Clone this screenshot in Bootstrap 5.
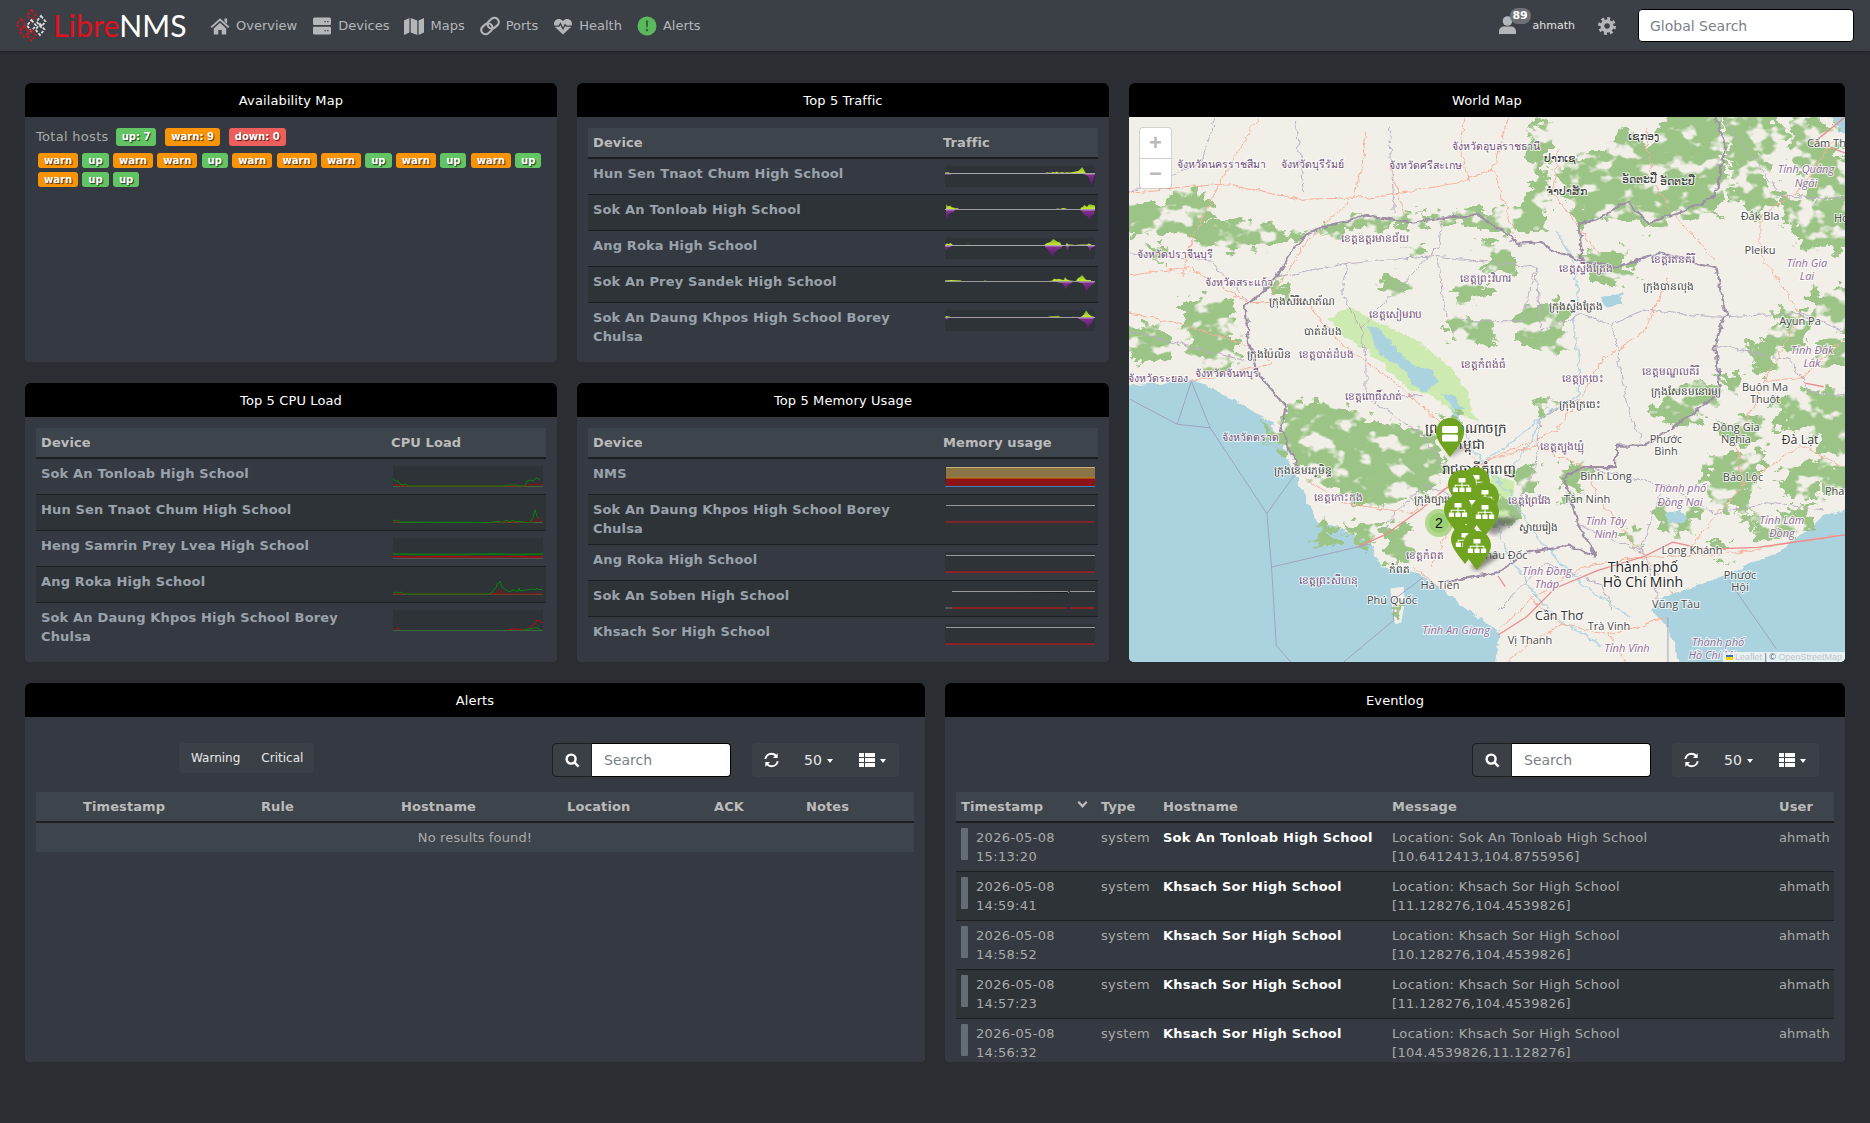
<!DOCTYPE html>
<html lang="en">
<head>
<meta charset="UTF-8">
<meta name="viewport" content="width=device-width, initial-scale=1.0">
<title>LibreNMS</title>
<link href="https://cdn.jsdelivr.net/npm/bootstrap@5.3.2/dist/css/bootstrap.min.css" rel="stylesheet">
<style>
body {
    background: #2a2e33;
    color: #aaa;
    font-family: "DejaVu Sans", sans-serif;
    font-size: 13px;
    line-height: 19px;
    min-height: 1123px;
}

/* top bar */
.top-bar {
    height: 51px;
    background: #3b4046;
    box-shadow: 0 1px 2px rgba(0,0,0,.25);
    padding: 0 15px;
    flex-wrap: nowrap;
}
.logo-link { width: 171px; height: 51px; color: #fff; font-family: "Lato", sans-serif; font-weight: 400; font-size: 30px; letter-spacing: .2px; text-decoration: none; }
.logo-link svg { width: 33px; height: 33px; margin-right: 5px; flex: none; }
.logo-red { color: #e3101e; }
.menu-link { color: #b4b7ba; text-decoration: none; display: flex; align-items: center; gap: 6px; white-space: nowrap; }
.menu-link svg { height: 20px; width: 20px; fill: #b4b7ba; flex: none; }
.top-menu { margin-left: 24px; gap: 15px; }
.user-box { position: relative; margin-left: auto; color: #e2e2e2; font-size: 11px; padding-left: 34px; height: 51px; }
.user-box > svg { position: absolute; left: 0; top: 15px; width: 17px; height: 19px; fill: #b4b7ba; }
.user-count { position: absolute; left: 11px; top: 8px; background: #6d7175; color: #fff; border-radius: 8px; font-size: 11px; font-weight: 700; line-height: 16px; width: 21px; text-align: center; }
.gear-icon { width: 18px; height: 18px; margin: 0 22px 0 23px; fill: none; stroke: #b4b7ba; }
.top-search { width: 216px; height: 33px; border: 1px solid #000; border-radius: 4px; padding: 0 11px; font-size: 14px; background: #fff; outline: 0; margin-right: 1px; }
.top-search::placeholder, .grid-search input::placeholder { color: #7a8288; opacity: 1; }

/* dashboard */
.dash-grid {
    display: grid;
    grid-template-columns: 532px 532px 716px;
    grid-template-rows: 279px 279px;
    gap: 21px 20px;
    padding: 32px 25px 0;
}
.map-cell { grid-column: 3; grid-row: 1 / span 2; }
.dash-bottom { display: flex; gap: 20px; padding: 21px 25px 0; }
.dash-bottom .panel-box { width: 900px; height: 379px; }
.panel-box {
    background: #353a42;
    border: 0;
    border-radius: 5px;
    overflow: hidden;
    color: #aaa;
    box-shadow: 0 0 1px rgba(255,255,255,.1);
}
.panel-head {
    background: #000;
    color: #fff;
    height: 34px;
    line-height: 36px;
    padding: 0;
    border: 0;
    border-radius: 0;
    text-align: center;
    letter-spacing: .12px;
}
.panel-inner { padding: 11px; }

/* availability */
.avail-top { display: flex; align-items: center; height: 18px; margin: 0 0 7px 0; }
.avail-top span:first-child { margin-right: 7px; letter-spacing: .3px; position: relative; top: -1px; }
.host-tag {
    display: inline-block;
    color: #fff;
    font-size: 10px;
    font-weight: 700;
    line-height: 15px;
    padding: 0 6px;
    border-radius: 3px;
    text-shadow: 1px 1px 1px rgba(0,0,0,.7);
}
.avail-top .host-tag { line-height: 18px; margin-right: 9px; }
.tag-up { background: #62c462; }
.tag-warn { background: #f89406; }
.tag-down { background: #ee5f5b; }
.tag-list { display: flex; flex-wrap: wrap; gap: 4px 4.3px; margin: 0 0 0 2px; width: 508px; }

/* tables */
.dash-table {
    --bs-table-bg: transparent;
    --bs-table-color: #aaa;
    table-layout: fixed;
    width: 100%;
    margin: 0;
    line-height: 19px;
    border-collapse: separate;
    border-spacing: 0;
}
.dash-table th {
    background: #3e444c;
    color: #bbb;
    font-weight: 700;
    padding: 5px;
    border: 0;
    border-bottom: 2px solid #1c1e22;
    white-space: nowrap;
    position: relative;
    letter-spacing: .1px;
}
.dash-table td {
    padding: 5px;
    border: 0;
    border-bottom: 1px solid #1c1e22;
    vertical-align: top;
    background: transparent;
    color: #aaa;
    letter-spacing: .33px;
}
.dash-table tbody tr:nth-child(even) > td { background: #2e3338; }
.dash-table tbody tr:last-child > td { border-bottom: 0; }
.dash-table tbody tr { height: 36px; }
.dash-table tbody tr.tall-row > td { padding-bottom: 6px; }
.host-link { color: #9aa2ab; font-weight: 700; text-decoration: none; letter-spacing: .16px; }
.col-graph { width: 160px; }
.spark { display: block; width: 150px; height: 21px; margin: 2px 0 0 2px; background: #2e3338; }
.sort-mark { position: absolute; right: 8px; top: 9px; width: 11px; height: 8px; fill: #bbb; }

/* toolbars */
.grid-bar { display: flex; align-items: flex-start; margin: 15px 0; height: 34px; }
.state-group { margin-left: 143px; background: #3b4047; border-radius: 4px; height: 30px; display: flex; align-items: center; padding: 0 11px 0 12px; gap: 21px; color: #e8e8e8; font-size: 12px; }
.grid-search { display: flex; height: 34px; margin-left: auto; }
.grid-search span { width: 40px; background: #3b4047; border: 1px solid #1c1e22; border-radius: 4px 0 0 4px; display: flex; align-items: center; justify-content: center; }
.grid-search svg { width: 15px; height: 15px; fill: none; stroke: #fff; stroke-width: 2.6; }
.grid-search input { width: 139px; border: 1px solid #000; border-left: 0; border-radius: 0 4px 4px 0; padding: 0 12px; font-size: 14px; outline: 0; background: #fff; }
.grid-actions { display: flex; align-items: center; height: 34px; width: 147px; margin: 0 15px 0 21px; background: #3b4047; border-radius: 4px; color: #e8e8e8; font-size: 14px; padding: 0 0 0 12px; }
.grid-actions svg { fill: #fff; flex: none; }
.caret-mark { display: inline-block; border-top: 4px solid #fff; border-left: 3.5px solid transparent; border-right: 3.5px solid transparent; margin-left: 5px; margin-top: 2px; }
.act-sync { width: 15px; height: 16px; margin-right: 25px; }
.act-list { width: 16px; height: 14px; margin-left: 26px; }
.dash-table tbody tr.no-rows { height: 29px; }
.no-rows td { text-align: center; background: #3e444c !important; padding: 5px; letter-spacing: .14px; }

.stamp-cell { display: flex; gap: 8px; white-space: normal; }
.stamp-bar { width: 7px; height: 32px; background: #666c75; flex: none; border-radius: 1px; }
.host-strong { color: #fff; font-weight: 700; letter-spacing: .23px; }
.log-table tbody tr { height: 49px; }
.log-table td:last-child { white-space: nowrap; padding-right: 0; letter-spacing: .1px; }

/* world map */
.map-wrap { position: relative; height: 545px; overflow: hidden; background: #f2efe9; }
.map-wrap > svg { display: block; width: 716px; height: 545px; }
.map-zoom { position: absolute; left: 11px; top: 11px; width: 31px; height: 60px; background: #fff; border-radius: 3px; box-shadow: 0 0 0 1px rgba(0,0,0,.12); color: #bbb; font: 700 22px/30px "Liberation Sans", sans-serif; text-align: center; }
.map-zoom div:first-child { border-bottom: 1px solid #ccc; }
.map-credit { position: absolute; right: 0; bottom: 0; height: 10px; background: rgba(255,255,255,.7); color: #c4c4c4; font: 9px/10px "Liberation Sans", sans-serif; padding: 0 3px; white-space: nowrap; }
.map-credit i { display: inline-block; width: 7px; height: 5px; background: linear-gradient(#3a6fc4 50%, #ffd500 50%); margin-right: 2px; }
.map-credit b { font-weight: 400; color: #555; }
.ml { font-family: "Open Sans", "Noto Sans", sans-serif; font-size: 11px; fill: #4a4a4a; text-anchor: middle; paint-order: stroke; stroke: rgba(255,255,255,.75); stroke-width: 2px; }
.ml.big { font-size: 14px; fill: #222; }
.ml.mid { font-size: 12.5px; fill: #333; }
.ml.it { font-style: italic; fill: #8f6a96; }
.ml.pv { fill: #6f4e78; font-size: 10.5px; }
.ml.tw { fill: #3c3c3c; font-size: 10.5px; }
.ml.cap { fill: #2c2c2c; font-size: 13.5px; }
.ml.st { text-anchor: start; }
.mp { vector-effect: non-scaling-stroke; }
.svg-store { position: absolute; width: 0; height: 0; }
</style>
</head>
<body>

<svg class="svg-store" aria-hidden="true">
    <defs>
        <linearGradient id="upFill" gradientUnits="userSpaceOnUse" x1="0" y1="0" x2="0" y2="7.500">
            <stop offset="0" stop-color="#5aa81a"/><stop offset=".55" stop-color="#a6d02a"/><stop offset="1" stop-color="#d2e83c"/>
        </linearGradient>
        <linearGradient id="downFill" gradientUnits="userSpaceOnUse" x1="0" y1="7.500" x2="0" y2="21">
            <stop offset="0" stop-color="#c98fc8"/><stop offset=".14" stop-color="#7f2f8c"/><stop offset="1" stop-color="#4a1458"/>
        </linearGradient>
        <filter id="roughBig" x="-5%" y="-5%" width="110%" height="110%">
            <feTurbulence type="fractalNoise" baseFrequency=".035" numOctaves="4" seed="7" result="warp"/>
            <feDisplacementMap in="SourceGraphic" in2="warp" scale="70" xChannelSelector="R" yChannelSelector="G" result="shape"/>
            <feTurbulence type="fractalNoise" baseFrequency=".022" numOctaves="3" seed="11"/>
            <feColorMatrix type="matrix" values="0 0 0 0 0  0 0 0 0 0  0 0 0 0 0  8 0 0 0 -2.800" result="holes"/>
            <feComposite in="shape" in2="holes" operator="in"/>
        </filter>
        <filter id="roughSmall" x="-5%" y="-5%" width="110%" height="110%">
            <feTurbulence type="fractalNoise" baseFrequency=".05" numOctaves="3" seed="4"/>
            <feDisplacementMap in="SourceGraphic" scale="18" xChannelSelector="R" yChannelSelector="G"/>
        </filter>
        <filter id="softShade"><feGaussianBlur stdDeviation="2"/></filter>
        <symbol id="pin" viewBox="0 0 30 39">
            <path d="M15 0C6.700 0 1 6.500 1 14.600 1 23 10.500 33 15 39 19.500 33 29 23 29 14.600 29 6.500 23.300 0 15 0Z" fill="#6fa320"/>
        </symbol>
        <g id="pinNet" fill="#fff">
            <rect x="11.500" y="8" width="7" height="4.500" rx=".6"/>
            <path d="M14.500 12.500h1v2.300h6.800v2.700h-1v-1.700h-5.800v1.700h-1v-1.700H8.700v1.700h-1v-2.700h6.800z"/>
            <rect x="5.800" y="17.500" width="5.200" height="4.500" rx=".6"/><rect x="12.400" y="17.500" width="5.200" height="4.500" rx=".6"/><rect x="19" y="17.500" width="5.200" height="4.500" rx=".6"/>
        </g>
        <symbol id="icHome" viewBox="0 0 20 20"><path d="M10 2.200 19.500 10.800l-1.300 1.300L10 4.700 1.800 12.100.5 10.800zM14.500 2.500h2.600v5.300l-2.600-2.300zM3.800 12.400 10 6.800l6.200 5.600v6.100h-4.500v-4.600H8.300v4.600H3.800z"/></symbol>
        <symbol id="icServer" viewBox="0 0 20 20"><path fill-rule="evenodd" d="M2.500 1.500h15a1.500 1.500 0 0 1 1.500 1.500v5a1 1 0 0 1-1 1H2a1 1 0 0 1-1-1V3a1.500 1.500 0 0 1 1.500-1.500zm10 3.500h1.300v1.300h-1.300zm2.700 0h1.300v1.300h-1.300zM2 10.800h16a1 1 0 0 1 1 1V17a1.500 1.500 0 0 1-1.500 1.500h-15A1.500 1.500 0 0 1 1 17v-5.200a1 1 0 0 1 1-1zm10.500 3.200v1.300h1.300V14zm2.700 0v1.300h1.300V14z"/></symbol>
        <symbol id="icMap" viewBox="0 0 20 20"><path d="M0 4.500 5.400 2v14.600L0 19zM6.700 2l6.600 2.500V19l-6.600-2.400zM14.600 4.500 20 2v14.600L14.600 19z"/></symbol>
        <symbol id="icLink" viewBox="0 0 20 20"><g fill="none" stroke="#b4b7ba" stroke-width="2.100"><rect x="-6" y="-4.300" width="12" height="8.600" rx="4.300" transform="translate(6.800 12.800) rotate(-40)"/><rect x="-6" y="-4.300" width="12" height="8.600" rx="4.300" transform="translate(13.200 7.200) rotate(-40)"/></g></symbol>
        <symbol id="icHeart" viewBox="0 0 20 20"><path d="M10 18.500 2.500 11.500C.6 9.600.4 6.500 2.200 4.500 4.100 2.400 7.700 2.300 10 5c2.300-2.700 5.900-2.600 7.800-.5 1.800 2 1.600 5.100-.3 7z"/><path d="M1 10.200h5l1.500-2.500 2.500 5 2-4 1.200 1.500H19" fill="none" stroke="#3b4046" stroke-width="1.300"/></symbol>
        <symbol id="icUser" viewBox="0 0 17 19"><circle cx="8.500" cy="6" r="4.800"/><path d="M0 19v-2.800C0 13.500 2.500 11.500 5 11.500h7c2.500 0 5 2 5 4.700V19z"/></symbol>
        <symbol id="icSync" viewBox="0 0 16 16"><path d="M8 2.300a5.600 5.600 0 0 0-5.500 4.500H.4A7.700 7.700 0 0 1 8 .3c2 0 3.700.8 5 2L14.600.7v5.100H9.500l2-2A5.500 5.500 0 0 0 8 2.300zM8 13.700a5.600 5.600 0 0 0 5.500-4.500h2.100A7.700 7.700 0 0 1 8 15.700c-2 0-3.700-.8-5-2l-1.600 1.600v-5.100h5.100l-2 2A5.500 5.500 0 0 0 8 13.700z"/></symbol>
        <symbol id="icList" viewBox="0 0 16 14"><path d="M0 0h5v4H0zM6 0h10v4H6zM0 5h5v4H0zM6 5h10v4H6zM0 10h5v4H0zM6 10h10v4H6z"/></symbol>
    </defs>
</svg>

<nav class="navbar top-bar d-flex align-items-center">
    <a class="logo-link d-flex align-items-center" href="#">
        <svg viewBox="0 0 33 33">
            <g fill="none" stroke-width="1.800" stroke-dasharray="3 1.500">
                <path d="M16.500 1 21 6.500 16.500 12 12 6.500Z" stroke="#c81622"/>
                <path d="M6 10 10.500 15.500 6 21 1.500 15.500Z" stroke="#c81622"/>
                <path d="M26 7 30.500 12.500 26 18 21.500 12.500Z" stroke="#dcdcdc"/>
                <path d="M16.500 11 21 16.500 16.500 22 12 16.500Z" stroke="#dcdcdc"/>
                <path d="M9 17 13.500 22.500 9 28 4.500 22.500Z" stroke="#c81622"/>
                <path d="M25 15 29.500 20.500 25 26 20.500 20.500Z" stroke="#dcdcdc"/>
                <path d="M16.500 21 21 26.500 16.500 32 12 26.500Z" stroke="#c81622"/>
            </g>
        </svg>
        <span><span class="logo-red">Libre</span>NMS</span>
    </a>
    <ul class="navbar-nav flex-row top-menu">
        <li class="nav-item"><a class="menu-link" href="#"><svg><use href="#icHome"/></svg>Overview</a></li>
        <li class="nav-item"><a class="menu-link" href="#"><svg><use href="#icServer"/></svg>Devices</a></li>
        <li class="nav-item"><a class="menu-link" href="#"><svg><use href="#icMap"/></svg>Maps</a></li>
        <li class="nav-item"><a class="menu-link" href="#"><svg><use href="#icLink"/></svg>Ports</a></li>
        <li class="nav-item"><a class="menu-link" href="#"><svg><use href="#icHeart"/></svg>Health</a></li>
        <li class="nav-item"><a class="menu-link" href="#">
            <svg viewBox="0 0 20 20"><circle cx="10" cy="10" r="9.500" fill="#5cb85c"/><path d="M8.800 4.500h2.400l-.4 7h-1.600zM8.900 13h2.200v2.300H8.900z" fill="#2f6b2f"/></svg>Alerts</a></li>
    </ul>
    <div class="user-box d-flex align-items-center">
        <svg><use href="#icUser"/></svg>
        <span class="user-count">89</span>
        ahmath
    </div>
    <svg class="gear-icon" viewBox="0 0 20 20">
        <circle cx="10" cy="10" r="5.200" stroke-width="4.200"/>
        <circle cx="10" cy="10" r="8.400" stroke-width="3.200" stroke-dasharray="3.300 3.300"/>
    </svg>
    <input class="top-search" type="text" placeholder="Global Search">
</nav>

<div class="dash-grid">
    <div class="card panel-box">
        <div class="card-header panel-head">Availability Map</div>
        <div class="card-body panel-inner">
            <div class="avail-top">
                <span>Total hosts</span>
                <span class="host-tag tag-up">up: 7</span>
                <span class="host-tag tag-warn">warn: 9</span>
                <span class="host-tag tag-down">down: 0</span>
            </div>
            <div class="tag-list">
                <span class="host-tag tag-warn">warn</span><span class="host-tag tag-up">up</span><span class="host-tag tag-warn">warn</span><span class="host-tag tag-warn">warn</span><span class="host-tag tag-up">up</span><span class="host-tag tag-warn">warn</span><span class="host-tag tag-warn">warn</span><span class="host-tag tag-warn">warn</span><span class="host-tag tag-up">up</span><span class="host-tag tag-warn">warn</span><span class="host-tag tag-up">up</span><span class="host-tag tag-warn">warn</span><span class="host-tag tag-up">up</span><span class="host-tag tag-warn">warn</span><span class="host-tag tag-up">up</span><span class="host-tag tag-up">up</span>
            </div>
        </div>
    </div>

    <div class="card panel-box">
        <div class="card-header panel-head">Top 5 Traffic</div>
        <div class="card-body panel-inner">
            <table class="table dash-table">
                <thead><tr><th>Device</th><th class="col-graph">Traffic</th></tr></thead>
                <tbody>
                    <tr><td><a class="host-link" href="#">Hun Sen Tnaot Chum High School</a></td><td><svg class="spark" viewBox="0 0 150 21">
                        <path d="M0 7.500V6.800L3 6.200 6 7.500ZM100 7.500l1-1 5 .2 2-.7 2 .5 2-1 1 1h3l1-.6 3 .8 1-.5 4 .3 3-.4 5-1 2-1.500 2-2.500 1.500 2 1.500 3 1 1.200v.7Z" fill="url(#upFill)"/>
                        <path d="M0 7.500h6V8.500H0zM137 7.500h13l-1 3-1 5-1.500 4-1.500-4-1-4-3-2.500-3-1Z" fill="url(#downFill)"/>
                        <path d="M0 7.500h150" stroke="#a9a9a9"/></svg></td></tr>
                    <tr><td><a class="host-link" href="#">Sok An Tonloab High School</a></td><td><svg class="spark" viewBox="0 0 150 21">
                        <path d="M1 7.500 1.500 2 3 4.500 5 3.500 7 5.500h2l1 .7h3l1 1.300ZM110 7.500l2-1 3 .5 3-1 3 .5 2 1ZM135 7.500l1-2 2-.5 1-2 2 1 1 1 2-3 1 1 1-1 1 1 2 0 1 1v4Z" fill="url(#upFill)"/>
                        <path d="M1 7.500h9l-2 3-3 .5-2 2-1 4-1-4ZM135 7.500h15l-1 4-1 2-1-1-1.500 3-1 3-2-4-2-1-2-1-1.500-3-2.500-2Z" fill="url(#downFill)"/>
                        <path d="M0 7.500h150" stroke="#a49aa4"/></svg></td></tr>
                    <tr><td><a class="host-link" href="#">Ang Roka High School</a></td><td><svg class="spark" viewBox="0 0 150 21">
                        <path d="M0 7.500 1 5.500l3 .5 1-1 2 1 1 1.500ZM22 7.500l1-1 1 1ZM99 7.500l2-2 3-1 2-1 2-2.500 2 1 2 1.500 3 1 2 3ZM120 7.500l1-1 1-2 1 2 2 0 5 .5 6-.5 6 0 2-1 2 1 2 1.500Z" fill="url(#upFill)"/>
                        <path d="M0 7.500h7l-2 2-2-.5-1 2-1 2ZM100 7.500h18l-2 3-3 1-2 2-2 1-1 5-2-3-2-3-2-3-2-1ZM121 7.500h3l-1 5-1-1ZM142 7.500h8l-2 2-2 1-1 3-1-3Z" fill="url(#downFill)"/>
                        <path d="M0 7.500h150" stroke="#a9a9a9"/></svg></td></tr>
                    <tr><td><a class="host-link" href="#">Sok An Prey Sandek High School</a></td><td><svg class="spark" viewBox="0 0 150 21">
                        <path d="M0 7.500V6.500L6 6l10 .5 1 1ZM38 7.500l2-1 3 1ZM95 7.500l8-.5 4-.2 2-2 3 .5 2-.5 3 1 2 .2 1-3 2 2.500 3 1 4 .5 2 0 2-3 2-1 2-2 2 2 1 2 2 1 2 0 2 .3v1.200Z" fill="url(#upFill)"/>
                        <path d="M109 7.500h19l-2 2-2 1-2 2-1 3-1.500-3-2-3-4-1ZM132 7.500h18l-1 2-3 2-2 2-1.500 2-1 4-1-4-1-3-2-3-4-1Z" fill="url(#downFill)"/>
                        <path d="M0 7.500h150" stroke="#9a9a9a"/></svg></td></tr>
                    <tr><td><a class="host-link" href="#">Sok An Daung Khpos High School Borey Chulsa</a></td><td><svg class="spark" viewBox="0 0 150 21">
                        <path d="M0 7.500 1 6l5 1 1 .5ZM100 7.500l5-1 5-.3 3-.5 3 .8ZM116 7.500l4-.5 6 .2 2-.5 4 .5 3 0 2-1 2-2 1-2 1-2 1 1 1 2 2 2 2 1 2 .5v1.300Z" fill="url(#upFill)"/>
                        <path d="M0 7.500h3l-1 3ZM132 7.500h18l-2 2-1 3-2 2-1 2-1 4-1-4-1-3-3-2-3-2-3-2Z" fill="url(#downFill)"/>
                        <path d="M0 7.500h150" stroke="#a49aa4"/></svg></td></tr>
                </tbody>
            </table>
        </div>
    </div>

    <div class="card panel-box map-cell">
        <div class="card-header panel-head">World Map</div>
        <div class="map-wrap">
            <svg viewBox="0 0 716 545">
                <g transform="translate(1 -7) scale(.4719 .3571)">
                    <!-- sea -->
                    <path fill="#aad3df" filter="url(#roughSmall)" d="M-30 775 60 765 130 755 170 775 200 800 250 835 300 875 325 950 350 1020 375 1095 395 1155 450 1175 510 1215 530 1280 600 1290 650 1330 690 1375 750 1430 785 1470 770 1570H-30ZM1170 1570 1140 1450 1105 1400 1120 1370 1170 1345 1230 1320 1300 1280 1370 1240 1440 1170 1480 1130 1540 1105V1570ZM1480 0H1540V80L1500 60Z"/>
                    <path fill="#f2efe9" d="M552 1340 580 1335 582 1380 575 1435 562 1440 556 1400Z"/>
                    <!-- protected area round the lake -->
                    <path fill="#cdebb0" filter="url(#roughSmall)" d="M420 585 465 550 520 590 600 640 680 720 710 780 735 870 690 850 640 800 590 780 520 690 460 640Z"/>
                    <path fill="#cdebb0" d="M770 1020 815 1040 810 1130 770 1150 745 1090Z"/>
                    <!-- forest -->
                    <path fill="#9bc486" filter="url(#roughBig)" d="M-30 270 60 260 110 220 160 300 300 320 365 345 300 390 170 390 100 345-30 340ZM365 340 500 295 700 285 830 270 860 190 845 110 860 20 890 30 880 335 800 345 700 320 560 322 400 352ZM900 150 950 130 1000 115 1050 50 1100 95 1135 15 1250 5 1265 200 1245 295 1140 302 1100 335 1030 295 950 325 925 240ZM1258 5 1345 0 1395 60 1340 150 1270 145ZM1270 150 1340 140 1380 250 1320 300 1280 250ZM1375 250 1540 250 1540 395 1420 385ZM1400 30 1480 20 1510 130 1540 160 1540 250 1440 240 1400 130ZM1440 510 1540 485 1540 635 1450 595ZM1375 550 1440 580 1430 670 1360 650ZM1450 640 1540 640 1530 720 1470 720ZM1360 820 1440 780 1540 780 1540 890 1380 895ZM1120 790 1200 750 1260 790 1190 890 1110 870ZM1220 965 1350 955 1310 1110 1230 1115ZM1115 1100 1210 1110 1190 1190 1120 1180ZM1320 1140 1440 1170 1340 1215ZM1380 990 1480 980 1460 1090 1390 1080ZM1475 990 1540 980 1540 1080 1480 1070ZM320 820 430 820 530 870 640 910 670 1000 630 1090 500 1115 430 1060 380 1020 330 940ZM110 520 210 530 240 710 170 730 120 670ZM-30 610 70 600 90 690 20 710ZM820 570 910 530 945 650 890 690 820 650ZM670 580 770 580 780 660 690 650ZM815 1000 870 1005 860 1070 810 1060ZM540 1160 600 1170 602 1260 540 1270ZM450 1155 530 1160 500 1250ZM385 1160 430 1155 435 1220 390 1225ZM905 1010 975 980 960 1070 910 1055ZM745 360 820 390 810 460 750 450ZM535 455 600 480 580 530 535 510ZM690 490 760 480 770 530 700 540ZM580 380 630 380 620 430ZM950 400 1050 390 1070 480 990 490ZM1000 180 1120 165 1130 270 1040 290ZM110 220 170 230 180 300 120 290ZM560 1370 578 1370 575 1425 562 1430ZM1250 870 1340 850 1350 930 1260 935ZM1240 740 1300 730 1290 800ZM1380 1120 1450 1110 1440 1170 1380 1180ZM1450 890 1540 880 1540 970 1460 960ZM280 860 340 890 330 960 290 930ZM750 1110 825 1090 840 1150 770 1170ZM1310 650 1380 630 1375 730 1320 740ZM30 370 80 380 70 440ZM290 470 340 490 320 540ZM1280 1120 1330 1120 1320 1190ZM1225 1210 1280 1210 1270 1270ZM850 810 890 805 880 870ZM1030 1180 1090 1170 1080 1230ZM650 850 700 850 690 910ZM910 1080 955 1080 945 1140ZM600 990 650 980 640 1070 600 1060Z"/>
                    <!-- lake + rivers -->
                    <path fill="#aad3df" filter="url(#roughSmall)" d="M505 600 535 625 585 695 595 715 640 730 655 760 625 790 598 770 588 735 560 710 520 670ZM1000 520 1040 515 1045 545 1005 550ZM1135 1130 1170 1120 1180 1150 1140 1160ZM660 795 690 800 705 840 680 830Z"/>
                    <g fill="none" stroke="#b3d6e2" stroke-width="1.500" filter="url(#roughSmall)">
                        <path class="mp" d="M905 340 940 430 950 520 940 600 950 700 950 800 870 860 800 940 745 985 765 1100 800 1245 860 1360 920 1440 1000 1500"/>
                        <path class="mp" d="M745 985 700 880 670 800M745 985 800 1070 860 1190 950 1320 1060 1420M870 860 850 930 810 1000"/>
                    </g>
                    <!-- main roads -->
                    <g fill="none" stroke="#f5b09a" stroke-width="1" filter="url(#roughSmall)">
                        <path class="mp" d="M-30 235 190 205 360 250 520 245 690 205 770 165M270 25 190 205 130 360 110 470M500 60 490 170 470 250 380 360 300 520M710 20 700 110 720 200M550 150 580 290M800 20 770 165 820 370M910 110 895 230 990 400M1090 50 1110 200 1150 290 1240 420M1490 90 1420 220 1335 300 1335 400 1420 570 1345 760 1285 930 1300 1050 1180 1230M1515 640 1420 750 1345 760M1515 1000 1420 940 1300 1050M1090 1250 960 1280 850 1370 780 1460M1090 1250 1155 1360M1090 1250 1290 1240 1400 1210 1515 1190M1090 1250 1000 1100 960 1000 860 940 740 990M740 990 650 870 560 760 450 660 370 530 250 540M740 990 600 1130 450 1100 370 1030M740 990 700 1100 640 1280M740 990 900 900 960 800 1000 700 1090 620 1140 470M-30 470 120 440 250 540M-30 560 110 600 250 660 300 710 200 740 130 760M600 1280 660 1340M915 1440 1015 1470 1140 1420M850 1370 915 1440 850 1490 800 1545M1016 1470 1050 1545"/>
                    </g>
                    <path fill="none" stroke="#ea8d8f" stroke-width="1.300" class="mp" d="M615 1120 540 1190 480 1225M740 990 660 1070 615 1120M1090 1250 1150 1210 1220 1230 1330 1225 1515 1190M1090 1250 990 1290 900 1340 840 1420 780 1470M1430 765 1470 775M1515 20 1450 90 1515 120M780 1305 795 1335"/>
                    <!-- province lines -->
                    <g fill="none" stroke="#bcaec4" stroke-width="1" filter="url(#roughSmall)">
                        <path class="mp" d="M310 470 460 430 450 520 490 610 655 380 660 310M460 430 650 410 860 440 870 620 960 570 1020 600 1090 560 1240 580M650 410 670 580M1020 600 1060 860 1090 940M860 440 830 590 700 590M870 860 950 810M490 610 500 690 500 800 620 800M500 800 620 910 660 990M620 1050 720 1100M720 1100 800 1170M860 1000 800 1170M860 1000 870 860M620 1050 530 1180M1240 660 1400 700 1440 790 1515 800M1240 580 1420 570 1515 620M1260 30 1380 240 1515 250M960 1000 1130 1050 1240 1130 1350 1100 1470 1120M1130 1050 1080 1240M950 1160 1090 1240 1120 1370M880 1270 1000 1330 1020 1400M880 1270 780 1400M0 400 170 420 250 540M0 620 120 660 240 700M180 20 150 150 0 230M350 30 370 230M550 50 560 290"/>
                    </g>
                    <!-- maritime limits -->
                    <g fill="none" stroke="#9fa5bf" stroke-width="1">
                        <path class="mp" d="M300 1280 510 1215M300 1280 290 1130 170 890 130 760M290 1130 350 1020M300 1280 310 1500 350 1560M440 1560 558 1430 560 1370 620 1310M170 890 100 880 0 810M100 880 130 760M1140 1420 1140 1560M1270 1320 1370 1510"/>
                    </g>
                    <!-- national borders -->
                    <path fill="none" stroke="#9d8ea6" stroke-width="2.200" stroke-linejoin="round" class="mp" filter="url(#roughSmall)" d="M360 1020 320 900 332 830 275 745 250 650 245 550 310 470 345 390 370 350 430 320 500 295 600 315 680 300 740 295 790 340 820 375 870 370 910 400 960 425 950 320 1000 300 1055 255 1100 320 1140 295 1200 270 1240 240 1262 100 1240 20M960 425 1030 440 1120 400 1240 440 1262 570 1240 660 1250 790 1190 850 1140 900 1090 940 1030 940 1030 1000 960 1000 920 1030 950 1160 985 1245 930 1220 840 1240 780 1295 700 1315 660 1325"/>
                </g>

                <!-- place names -->
                <g>
                    <text class="ml st" x="678" y="30">Cẩm Th</text>
                    <text class="ml it" x="677" y="56">Tỉnh Quảng</text><text class="ml it" x="677" y="70">Ngãi</text>
                    <text class="ml" x="631" y="103">Đắk Bla</text>
                    <text class="ml st" x="705" y="105">Ho</text>
                    <text class="ml" x="631" y="137">Pleiku</text>
                    <text class="ml it" x="678" y="150">Tỉnh Gia</text><text class="ml it" x="678" y="163">Lai</text>
                    <text class="ml" x="671" y="208">Ayun Pa</text>
                    <text class="ml it" x="683" y="237">Tỉnh Đắk</text><text class="ml it" x="683" y="250">Lắk</text>
                    <text class="ml" x="636" y="274">Buôn Ma</text><text class="ml" x="636" y="286">Thuột</text>
                    <text class="ml" x="607" y="314">Đông Gia</text><text class="ml" x="607" y="326">Nghĩa</text>
                    <text class="ml mid" x="671" y="327">Đà Lạt</text>
                    <text class="ml" x="537" y="326">Phước</text><text class="ml" x="537" y="338">Bình</text>
                    <text class="ml" x="477" y="363">Bình Long</text>
                    <text class="ml" x="614" y="364">Bảo Lộc</text>
                    <text class="ml" x="458" y="386">Tân Ninh</text>
                    <text class="ml it" x="551" y="375">Thành phố</text><text class="ml it" x="551" y="389">Đồng Nai</text>
                    <text class="ml st" x="696" y="378">Phar</text>
                    <text class="ml it" x="477" y="408">Tỉnh Tây</text><text class="ml it" x="477" y="421">Ninh</text>
                    <text class="ml it" x="653" y="407">Tỉnh Lâm</text><text class="ml it" x="653" y="420">Đồng</text>
                    <text class="ml" x="563" y="437">Long Khánh</text>
                    <text class="ml big" x="514" y="455">Thành phố</text><text class="ml big" x="514" y="470">Hồ Chí Minh</text>
                    <text class="ml" x="611" y="462">Phước</text><text class="ml" x="611" y="474">Hội</text>
                    <text class="ml" x="547" y="491">Vũng Tàu</text>
                    <text class="ml" x="374" y="442">Châu Đốc</text>
                    <text class="ml it" x="418" y="458">Tỉnh Đồng</text><text class="ml it" x="418" y="471">Tháp</text>
                    <text class="ml" x="311" y="472">Hà Tiên</text>
                    <text class="ml" x="263" y="487">Phú Quốc</text>
                    <text class="ml mid" x="430" y="503">Cần Thơ</text>
                    <text class="ml" x="480" y="513">Trà Vinh</text>
                    <text class="ml" x="401" y="527">Vị Thanh</text>
                    <text class="ml it" x="498" y="535">Tỉnh Vĩnh</text>
                    <text class="ml it" x="327" y="517">Tỉnh An Giang</text>
                    <text class="ml it" x="589" y="529">Thành phố</text><text class="ml it" x="583" y="542">Hồ Chí Mi</text>

                    <text class="ml pv" x="92" y="51">จังหวัดนครราชสีมา</text>
                    <text class="ml pv" x="183" y="51">จังหวัดบุรีรัมย์</text>
                    <text class="ml pv" x="296" y="52">จังหวัดศรีสะเกษ</text>
                    <text class="ml pv" x="367" y="33">จังหวัดอุบลราชธานี</text>
                    <text class="ml pv" x="46" y="141">จังหวัดปราจีนบุรี</text>
                    <text class="ml pv" x="110" y="169">จังหวัดสระแก้ว</text>
                    <text class="ml pv" x="98" y="260">จังหวัดจันทบุรี</text>
                    <text class="ml pv" x="29" y="265">จังหวัดระยอง</text>
                    <text class="ml pv" x="121" y="324">จังหวัดตราด</text>
                    <text class="ml tw" x="431" y="45">ປາກເຊ</text>
                    <text class="ml tw" x="437" y="78">ຈຳປາສັກ</text>
                    <text class="ml tw" x="514" y="23">ເຊກອງ</text>
                    <text class="ml tw" x="510" y="66">ອັດຕະປື</text>
                    <text class="ml tw" x="548" y="68">ອັດຕະປື</text>

                    <text class="ml pv" x="246" y="125">ខេត្តឧត្តរមានជ័យ</text>
                    <text class="ml pv" x="356" y="165">ខេត្តព្រះវិហារ</text>
                    <text class="ml pv" x="457" y="155">ខេត្តស្ទឹងត្រែង</text>
                    <text class="ml pv" x="544" y="146">ខេត្តរតនគិរី</text>
                    <text class="ml tw" x="539" y="173">ក្រុងបានលុង</text>
                    <text class="ml tw" x="447" y="193">ក្រុងស្ទឹងត្រែង</text>
                    <text class="ml tw" x="173" y="188">ក្រុងសិរីសោភ័ណ</text>
                    <text class="ml pv" x="266" y="201">ខេត្តសៀមរាប</text>
                    <text class="ml tw" x="194" y="218">បាត់ដំបង</text>
                    <text class="ml tw" x="140" y="241">ក្រុងប៉ៃលិន</text>
                    <text class="ml pv" x="197" y="241">ខេត្តបាត់ដំបង</text>
                    <text class="ml pv" x="354" y="251">ខេត្តកំពង់ធំ</text>
                    <text class="ml pv" x="454" y="265">ខេត្តក្រចេះ</text>
                    <text class="ml pv" x="541" y="258">ខេត្តមណ្ឌលគិរី</text>
                    <text class="ml tw" x="557" y="278">ក្រុងសែនមនោរម្យ</text>
                    <text class="ml tw" x="451" y="291">ក្រុងក្រចេះ</text>
                    <text class="ml pv" x="244" y="283">ខេត្តពោធិ៍សាត់</text>
                    <text class="ml cap" x="337" y="316">ព្រះរាជាណាចក្រ</text>
                    <text class="ml cap" x="340" y="332">កម្ពុជា</text>
                    <text class="ml pv" x="433" y="333">ខេត្តត្បូងឃ្មុំ</text>
                    <text class="ml tw" x="174" y="357">ក្រុងខេមរភូមិន្ទ</text>
                    <text class="ml cap" x="350" y="357">រាជធានីភ្នំពេញ</text>
                    <text class="ml pv" x="209" y="384">ខេត្តកោះកុង</text>
                    <text class="ml tw" x="308" y="386">ក្រុងច្បារមន</text>
                    <text class="ml pv" x="400" y="387">ខេត្តព្រៃវែង</text>
                    <text class="ml tw" x="409" y="414">ស្វាយរៀង</text>
                    <text class="ml pv" x="296" y="442">ខេត្តកំពត</text>
                    <text class="ml tw" x="270" y="456">កំពត</text>
                    <text class="ml pv" x="199" y="467">ខេត្តព្រះសីហនុ</text>
                </g>

                <!-- markers -->
                <circle cx="310" cy="406" r="14" fill="#8fcc5f" fill-opacity=".65"/>
                <circle cx="310" cy="406" r="10" fill="#7cc04a" fill-opacity=".4"/>
                <text x="310" y="411" text-anchor="middle" font-family="Liberation Sans, sans-serif" font-size="14" fill="#111">2</text>
                <g>
                    <path d="M366 418 390 402 368 400 356 414Z" fill="#444" opacity=".55" filter="url(#softShade)"/>
                    <path d="M348 454 372 438 352 436 342 450Z" fill="#444" opacity=".6" filter="url(#softShade)"/>
                    <use href="#pin" x="332" y="350" width="30" height="39"/><use href="#pinNet" x="332" y="350"/>
                    <use href="#pin" x="341" y="365" width="30" height="39"/><use href="#pinNet" x="341" y="365"/>
                    <use href="#pin" x="318" y="353" width="30" height="39"/><use href="#pinNet" x="318" y="353"/>
                    <use href="#pin" x="328" y="375" width="30" height="39"/><use href="#pinNet" x="328" y="375"/>
                    <use href="#pin" x="314" y="378" width="30" height="39"/><use href="#pinNet" x="314" y="378"/>
                    <use href="#pin" x="341" y="380" width="30" height="39"/><use href="#pinNet" x="341" y="380"/>
                    <use href="#pin" x="321" y="408" width="30" height="39"/><use href="#pinNet" x="321" y="408"/>
                    <use href="#pin" x="333" y="414" width="30" height="39"/><use href="#pinNet" x="333" y="414"/>
                    <path d="M322 340 338 330 328 326 318 336Z" fill="#444" opacity=".4" filter="url(#softShade)"/>
                    <use href="#pin" x="306" y="301" width="30" height="39"/>
                    <g fill="#fff"><rect x="313" y="309" width="16" height="7" rx="1.500"/><rect x="313" y="317.500" width="16" height="7" rx="1.500"/></g>
                </g>
            </svg>
            <div class="map-zoom"><div>+</div><div>−</div></div>
            <div class="map-credit"><i></i>Leaflet <b>|</b> <b>©</b> OpenStreetMap</div>
        </div>
    </div>

    <div class="card panel-box">
        <div class="card-header panel-head">Top 5 CPU Load</div>
        <div class="card-body panel-inner">
            <table class="table dash-table">
                <thead><tr><th>Device</th><th class="col-graph">CPU Load</th></tr></thead>
                <tbody>
                    <tr><td><a class="host-link" href="#">Sok An Tonloab High School</a></td><td><svg class="spark" viewBox="0 0 150 21" fill="none">
                        <path d="M0 20.500h150" stroke="#3d6b3d"/>
                        <path d="M0 19h5l3 1h125l3-2 3 1 5-1 6 1" stroke="#a00c0c"/>
                        <path d="M0 12l2 3 3 0 2 3 3 1 3-1 2 2h95l6-1h8l3 1h5l2-5 3-1 3 1 3-3 3 1 1 1" stroke="#0b800b"/></svg></td></tr>
                    <tr><td><a class="host-link" href="#">Hun Sen Tnaot Chum High School</a></td><td><svg class="spark" viewBox="0 0 150 21" fill="none" style="background:transparent">
                        <path d="M0 20.500h150" stroke="#3d6b3d"/>
                        <path d="M0 20h8M100 20h40l4-2 1-3 2 4 3 1" stroke="#a00c0c"/>
                        <path d="M0 18l3 1 2-1 2 2h3l88 .5 4-1 4 0 3 1 4-2 4 1 3-1 3 1 4 0 6 1h4l3-5 2-8 2 7 2 2" stroke="#0b800b"/></svg></td></tr>
                    <tr><td><a class="host-link" href="#">Heng Samrin Prey Lvea High School</a></td><td><svg class="spark" viewBox="0 0 150 21" fill="none">
                        <path d="M0 20.500h150" stroke="#555"/>
                        <path d="M0 18.500l20 .5 30-.5 40 .5 30-.5 25 .5 5-.5" stroke="#b00c0c" stroke-width="1.300"/>
                        <path d="M0 16l30 .5 40 0 30-.5 25 .5 25-.5" stroke="#0b800b" stroke-width="1.300"/></svg></td></tr>
                    <tr><td><a class="host-link" href="#">Ang Roka High School</a></td><td><svg class="spark" viewBox="0 0 150 21" fill="none" style="background:transparent">
                        <path d="M0 20.500h150" stroke="#3d6b3d"/>
                        <path d="M100 20l4-1 2-3 2 1 3 3M0 20h150" stroke="#a00c0c"/>
                        <path d="M0 19l3-1 3 1 2-1 3 2 84 0 4-1 2-4 2-1 1-4 2-1 1-2 2 6 2 2 3 1 2 2 3-1 1-2 2 2 3 0 1-3 1 3 6-1 6-1 3 1 2-2 2 2 3-1" stroke="#0b800b"/></svg></td></tr>
                    <tr><td><a class="host-link" href="#">Sok An Daung Khpos High School Borey Chulsa</a></td><td><svg class="spark" viewBox="0 0 150 21" fill="none">
                        <path d="M0 20.500h150" stroke="#3d6b3d"/>
                        <path d="M3 20l2-3 2 3M115 20l5-1 3 0 2 1 3-1 3 1M135 20l3-4 3-1 2-4 3-1 2 3 1-1 1 1 1 1" stroke="#b00c0c"/>
                        <path d="M130 20l6-1 5-1 4 0 3 2" stroke="#0b800b"/></svg></td></tr>
                </tbody>
            </table>
        </div>
    </div>

    <div class="card panel-box">
        <div class="card-header panel-head">Top 5 Memory Usage</div>
        <div class="card-body panel-inner">
            <table class="table dash-table">
                <thead><tr><th>Device</th><th class="col-graph">Memory usage</th></tr></thead>
                <tbody>
                    <tr><td><a class="host-link" href="#">NMS</a></td><td><svg class="spark" viewBox="0 0 150 21">
                        <rect x="1" y="1" width="149" height="12" fill="#8b7445"/>
                        <rect x="1" y="12" width="149" height="8" fill="#8d1416"/>
                        <path d="M1 1.500h149" stroke="#c9b27d"/>
                        <path d="M1 12h149" stroke="#c97f14"/>
                        <path d="M0 20.500h150" stroke="#3c80c0"/></svg></td></tr>
                    <tr class="tall-row"><td><a class="host-link" href="#">Sok An Daung Khpos High School Borey Chulsa</a></td><td><svg class="spark" viewBox="0 0 150 21" style="background:transparent">
                        <path d="M1 3.500h149" stroke="#9a9a9a"/>
                        <path d="M0 20h150" stroke="#c81414"/></svg></td></tr>
                    <tr><td><a class="host-link" href="#">Ang Roka High School</a></td><td><svg class="spark" viewBox="0 0 150 21">
                        <path d="M1 3.500h149" stroke="#9a9a9a"/>
                        <path d="M0 20h150" stroke="#e01414"/></svg></td></tr>
                    <tr><td><a class="host-link" href="#">Sok An Soben High School</a></td><td><svg class="spark" viewBox="0 0 150 21" style="background:transparent">
                        <path d="M7 3.500h115l2 1M125 3.500h25" stroke="#9a9a9a"/>
                        <path d="M0 20h7" stroke="#777"/>
                        <path d="M7 20h115M125 20h25" stroke="#e01414"/></svg></td></tr>
                    <tr><td><a class="host-link" href="#">Khsach Sor High School</a></td><td><svg class="spark" viewBox="0 0 150 21">
                        <path d="M1 3.500h149" stroke="#9a9a9a"/>
                        <path d="M0 20h150" stroke="#e01414"/></svg></td></tr>
                </tbody>
            </table>
        </div>
    </div>
</div>

<div class="dash-bottom">
    <div class="card panel-box">
        <div class="card-header panel-head">Alerts</div>
        <div class="card-body panel-inner">
            <div class="grid-bar">
                <div class="state-group"><span>Warning</span><span>Critical</span></div>
                <div class="grid-search">
                    <span><svg viewBox="0 0 16 16"><circle cx="6.500" cy="6.500" r="4.800"/><path d="M10 10l4.500 4.500"/></svg></span>
                    <input type="text" placeholder="Search">
                </div>
                <div class="grid-actions">
                    <svg class="act-sync"><use href="#icSync"/></svg>50<i class="caret-mark"></i>
                    <svg class="act-list"><use href="#icList"/></svg><i class="caret-mark"></i>
                </div>
            </div>
            <table class="table dash-table">
                <colgroup><col style="width:42px"><col style="width:178px"><col style="width:140px"><col style="width:166px"><col style="width:147px"><col style="width:92px"><col style="width:113px"></colgroup>
                <thead><tr><th></th><th>Timestamp</th><th>Rule</th><th>Hostname</th><th>Location</th><th>ACK</th><th>Notes</th></tr></thead>
                <tbody><tr class="no-rows"><td colspan="7">No results found!</td></tr></tbody>
            </table>
        </div>
    </div>

    <div class="card panel-box">
        <div class="card-header panel-head">Eventlog</div>
        <div class="card-body panel-inner">
            <div class="grid-bar">
                <div class="grid-search">
                    <span><svg viewBox="0 0 16 16"><circle cx="6.500" cy="6.500" r="4.800"/><path d="M10 10l4.500 4.500"/></svg></span>
                    <input type="text" placeholder="Search">
                </div>
                <div class="grid-actions">
                    <svg class="act-sync"><use href="#icSync"/></svg>50<i class="caret-mark"></i>
                    <svg class="act-list"><use href="#icList"/></svg><i class="caret-mark"></i>
                </div>
            </div>
            <table class="table dash-table log-table">
                <colgroup><col style="width:140px"><col style="width:62px"><col style="width:229px"><col style="width:387px"><col style="width:60px"></colgroup>
                <thead><tr><th>Timestamp<svg class="sort-mark" viewBox="0 0 10 8"><path d="M0 1.500 1.500 0 5 3.500 8.500 0 10 1.500 5 7z"/></svg></th><th>Type</th><th>Hostname</th><th>Message</th><th>User</th></tr></thead>
                <tbody>
                    <tr><td><div class="stamp-cell"><span class="stamp-bar"></span><span>2026-05-08 15:13:20</span></div></td><td>system</td><td><a class="host-strong text-decoration-none" href="#">Sok An Tonloab High School</a></td><td>Location: Sok An Tonloab High School [10.6412413,104.8755956]</td><td>ahmath</td></tr>
                    <tr><td><div class="stamp-cell"><span class="stamp-bar"></span><span>2026-05-08 14:59:41</span></div></td><td>system</td><td><a class="host-strong text-decoration-none" href="#">Khsach Sor High School</a></td><td>Location: Khsach Sor High School [11.128276,104.4539826]</td><td>ahmath</td></tr>
                    <tr><td><div class="stamp-cell"><span class="stamp-bar"></span><span>2026-05-08 14:58:52</span></div></td><td>system</td><td><a class="host-strong text-decoration-none" href="#">Khsach Sor High School</a></td><td>Location: Khsach Sor High School [10.128276,104.4539826]</td><td>ahmath</td></tr>
                    <tr><td><div class="stamp-cell"><span class="stamp-bar"></span><span>2026-05-08 14:57:23</span></div></td><td>system</td><td><a class="host-strong text-decoration-none" href="#">Khsach Sor High School</a></td><td>Location: Khsach Sor High School [11.128276,104.4539826]</td><td>ahmath</td></tr>
                    <tr><td><div class="stamp-cell"><span class="stamp-bar"></span><span>2026-05-08 14:56:32</span></div></td><td>system</td><td><a class="host-strong text-decoration-none" href="#">Khsach Sor High School</a></td><td>Location: Khsach Sor High School [104.4539826,11.128276]</td><td>ahmath</td></tr>
                </tbody>
            </table>
        </div>
    </div>
</div>

<script src="https://cdn.jsdelivr.net/npm/bootstrap@5.3.2/dist/js/bootstrap.bundle.min.js"></script>
</body>
</html>
